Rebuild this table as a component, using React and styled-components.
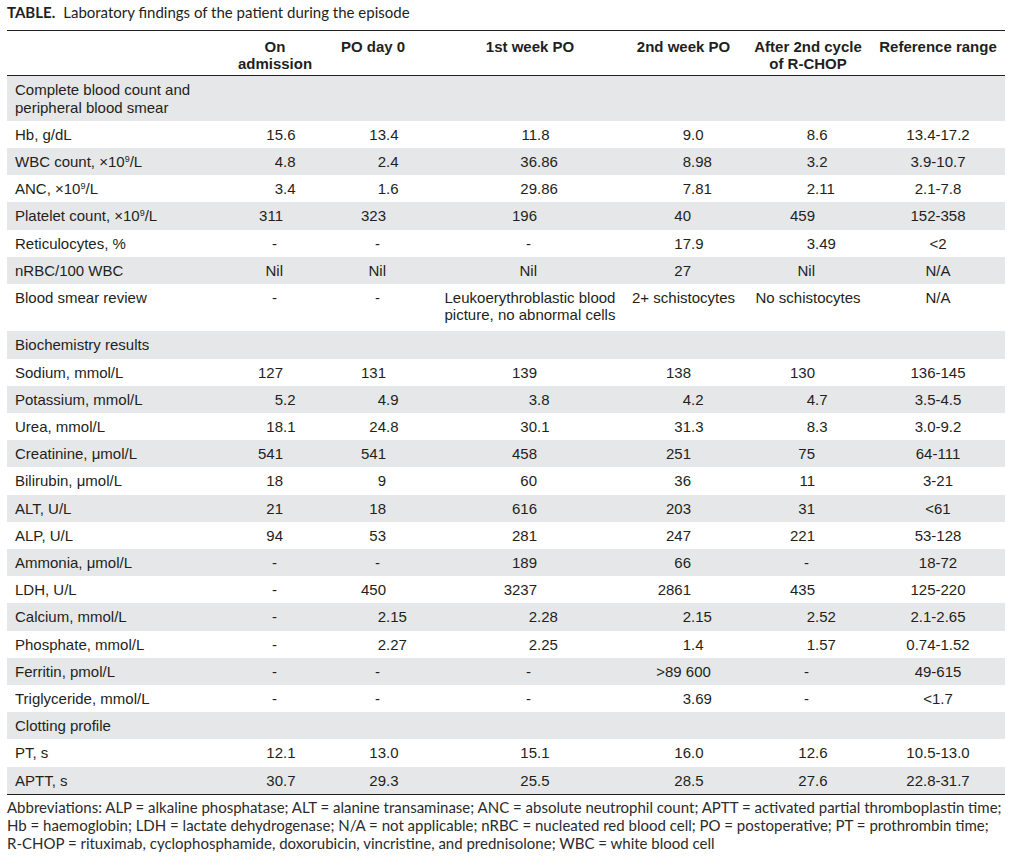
import React from "react";
import styled, { createGlobalStyle } from "styled-components";

const ink = "#231f20";
const stripe = "#e6e7e8";

// label, c1..c6, trailing gutter
const COLUMNS = "219px 98px 98px 216px 91px 158px 102px 16px";
// x of the decimal point inside each value column (from the column's left edge)
const ANCHORS = [57, 62, 115, 53, 86];

const GlobalStyle = createGlobalStyle`
  html, body {
    margin: 0;
    padding: 0;
    background: #ffffff;
  }
  body {
    font-family: "Liberation Sans", Arial, sans-serif;
    color: ${ink};
  }
`;

const Page = styled.div`
  width: 998px;
  padding-left: 7px;
`;

const Caption = styled.div`
  font-family: Lato, "Open Sans", sans-serif;
  font-size: 15px;
  line-height: 18px;
  padding-top: 3px;
  margin-bottom: 9px;
  color: ${ink};
`;

const CaptionTag = styled.span`
  font-weight: 700;
  margin-right: 8px;
`;

const Table = styled.div`
  border-top: 1px solid ${ink};
  border-bottom: 1px solid ${ink};
  font-size: 15px;
  line-height: 17.2px;
`;

const HeadRow = styled.div`
  display: grid;
  grid-template-columns: ${COLUMNS};
  padding: 7px 0 3px;
  border-bottom: 1px solid ${ink};
`;

const HeadCell = styled.div`
  display: flex;
  justify-content: center;
  text-align: center;
  font-weight: 700;
  white-space: nowrap;
`;

const Row = styled.div`
  display: grid;
  grid-template-columns: ${COLUMNS};
  align-items: start;
  padding: 5px 0 ${p => (p.$tall ? "8px" : "5px")};
  background: ${p => (p.$shaded ? stripe : "transparent")};
`;

const SectionRow = styled.div`
  padding: 5px 8px;
  background: ${p => (p.$shaded ? stripe : "transparent")};
`;

const Label = styled.div`
  padding-left: 8px;
  white-space: nowrap;
`;

const NumCell = styled.div`
  display: grid;
  grid-template-columns: ${p => p.$anchor}px auto;
  white-space: nowrap;
`;

const IntPart = styled.span`
  text-align: right;
  padding-right: ${p => (p.$dash ? "6px" : "0")};
`;

const TextCell = styled.div`
  display: flex;
  justify-content: center;
  text-align: center;
  white-space: nowrap;
`;

const Sup = styled.sup`
  font-size: 9px;
  line-height: 0;
  vertical-align: 5px;
`;

const Footnote = styled.div`
  font-family: Lato, "Open Sans", sans-serif;
  font-size: 15px;
  line-height: 18px;
  padding-top: 3px;
  color: #2b2b2b;
`;

const FootLine = styled.div`
  white-space: nowrap;
`;

const perL = (name) => (
  <>
    {name}, ×10<Sup>9</Sup>/L
  </>
);

const rows = [
  { section: ["Complete blood count and", "peripheral blood smear"] },
  { label: "Hb, g/dL", values: ["15.6", "13.4", "11.8", "9.0", "8.6", "13.4-17.2"] },
  { label: perL("WBC count"), values: ["4.8", "2.4", "36.86", "8.98", "3.2", "3.9-10.7"] },
  { label: perL("ANC"), values: ["3.4", "1.6", "29.86", "7.81", "2.11", "2.1-7.8"] },
  { label: perL("Platelet count"), values: ["311", "323", "196", "40", "459", "152-358"] },
  { label: "Reticulocytes, %", values: ["-", "-", "-", "17.9", "3.49", "<2"] },
  { label: "nRBC/100 WBC", values: ["Nil", "Nil", "Nil", "27", "Nil", "N/A"] },
  {
    label: "Blood smear review",
    tall: true,
    values: [
      "-",
      "-",
      ["Leukoerythroblastic blood", "picture, no abnormal cells"],
      "2+ schistocytes",
      "No schistocytes",
      "N/A",
    ],
  },
  { section: ["Biochemistry results"] },
  { label: "Sodium, mmol/L", values: ["127", "131", "139", "138", "130", "136-145"] },
  { label: "Potassium, mmol/L", values: ["5.2", "4.9", "3.8", "4.2", "4.7", "3.5-4.5"] },
  { label: "Urea, mmol/L", values: ["18.1", "24.8", "30.1", "31.3", "8.3", "3.0-9.2"] },
  { label: "Creatinine, μmol/L", values: ["541", "541", "458", "251", "75", "64-111"] },
  { label: "Bilirubin, μmol/L", values: ["18", "9", "60", "36", "11", "3-21"] },
  { label: "ALT, U/L", values: ["21", "18", "616", "203", "31", "<61"] },
  { label: "ALP, U/L", values: ["94", "53", "281", "247", "221", "53-128"] },
  { label: "Ammonia, μmol/L", values: ["-", "-", "189", "66", "-", "18-72"] },
  { label: "LDH, U/L", values: ["-", "450", "3237", "2861", "435", "125-220"] },
  { label: "Calcium, mmol/L", values: ["-", "2.15", "2.28", "2.15", "2.52", "2.1-2.65"] },
  { label: "Phosphate, mmol/L", values: ["-", "2.27", "2.25", "1.4", "1.57", "0.74-1.52"] },
  { label: "Ferritin, pmol/L", values: ["-", "-", "-", ">89 600", "-", "49-615"] },
  { label: "Triglyceride, mmol/L", values: ["-", "-", "-", "3.69", "-", "<1.7"] },
  { section: ["Clotting profile"] },
  { label: "PT, s", values: ["12.1", "13.0", "15.1", "16.0", "12.6", "10.5-13.0"] },
  { label: "APTT, s", values: ["30.7", "29.3", "25.5", "28.5", "27.6", "22.8-31.7"] },
];

const Value = ({ value, col }) => {
  // last column and free text are centred, numbers line up on the decimal point
  if (Array.isArray(value)) {
    return (
      <TextCell>
        <div>
          {value.map(line => (
            <div key={line}>{line}</div>
          ))}
        </div>
      </TextCell>
    );
  }
  const isNumber = /^\d+(\.\d+)?$/.test(value) || value === "Nil";
  if (col < 5 && value === "-") {
    return (
      <NumCell $anchor={ANCHORS[col]}>
        <IntPart $dash>-</IntPart>
        <span />
      </NumCell>
    );
  }
  if (col < 5 && isNumber) {
    const [whole, frac] = value.split(".");
    return (
      <NumCell $anchor={ANCHORS[col]}>
        <IntPart>{whole}</IntPart>
        <span>{frac ? "." + frac : ""}</span>
      </NumCell>
    );
  }
  return <TextCell>{value}</TextCell>;
};

const headers = [
  ["On", "admission"],
  ["PO day 0"],
  ["1st week PO"],
  ["2nd week PO"],
  ["After 2nd cycle", "of R-CHOP"],
  ["Reference range"],
];

export default function App() {
  return (
    <Page>
      <GlobalStyle />
      <Caption>
        <CaptionTag>TABLE.</CaptionTag>
        Laboratory findings of the patient during the episode
      </Caption>
      <Table>
        <HeadRow>
          <div />
          {headers.map(lines => (
            <HeadCell key={lines[0]}>
              <div>
                {lines.map(l => (
                  <div key={l}>{l}</div>
                ))}
              </div>
            </HeadCell>
          ))}
          <div />
        </HeadRow>
        {rows.map((row, i) =>
          row.section ? (
            <SectionRow key={i} $shaded={i % 2 === 0}>
              {row.section.map(l => (
                <div key={l}>{l}</div>
              ))}
            </SectionRow>
          ) : (
            <Row key={i} $shaded={i % 2 === 0} $tall={row.tall}>
              <Label>{row.label}</Label>
              {row.values.map((v, c) => (
                <Value key={c} value={v} col={c} />
              ))}
              <div />
            </Row>
          )
        )}
      </Table>
      <Footnote>
        <FootLine>
          Abbreviations: ALP = alkaline phosphatase; ALT = alanine transaminase; ANC = absolute neutrophil count; APTT = activated partial thromboplastin time;
        </FootLine>
        <FootLine>
          Hb = haemoglobin; LDH = lactate dehydrogenase; N/A = not applicable; nRBC = nucleated red blood cell; PO = postoperative; PT = prothrombin time;
        </FootLine>
        <FootLine>
          R-CHOP = rituximab, cyclophosphamide, doxorubicin, vincristine, and prednisolone; WBC = white blood cell
        </FootLine>
      </Footnote>
    </Page>
  );
}
